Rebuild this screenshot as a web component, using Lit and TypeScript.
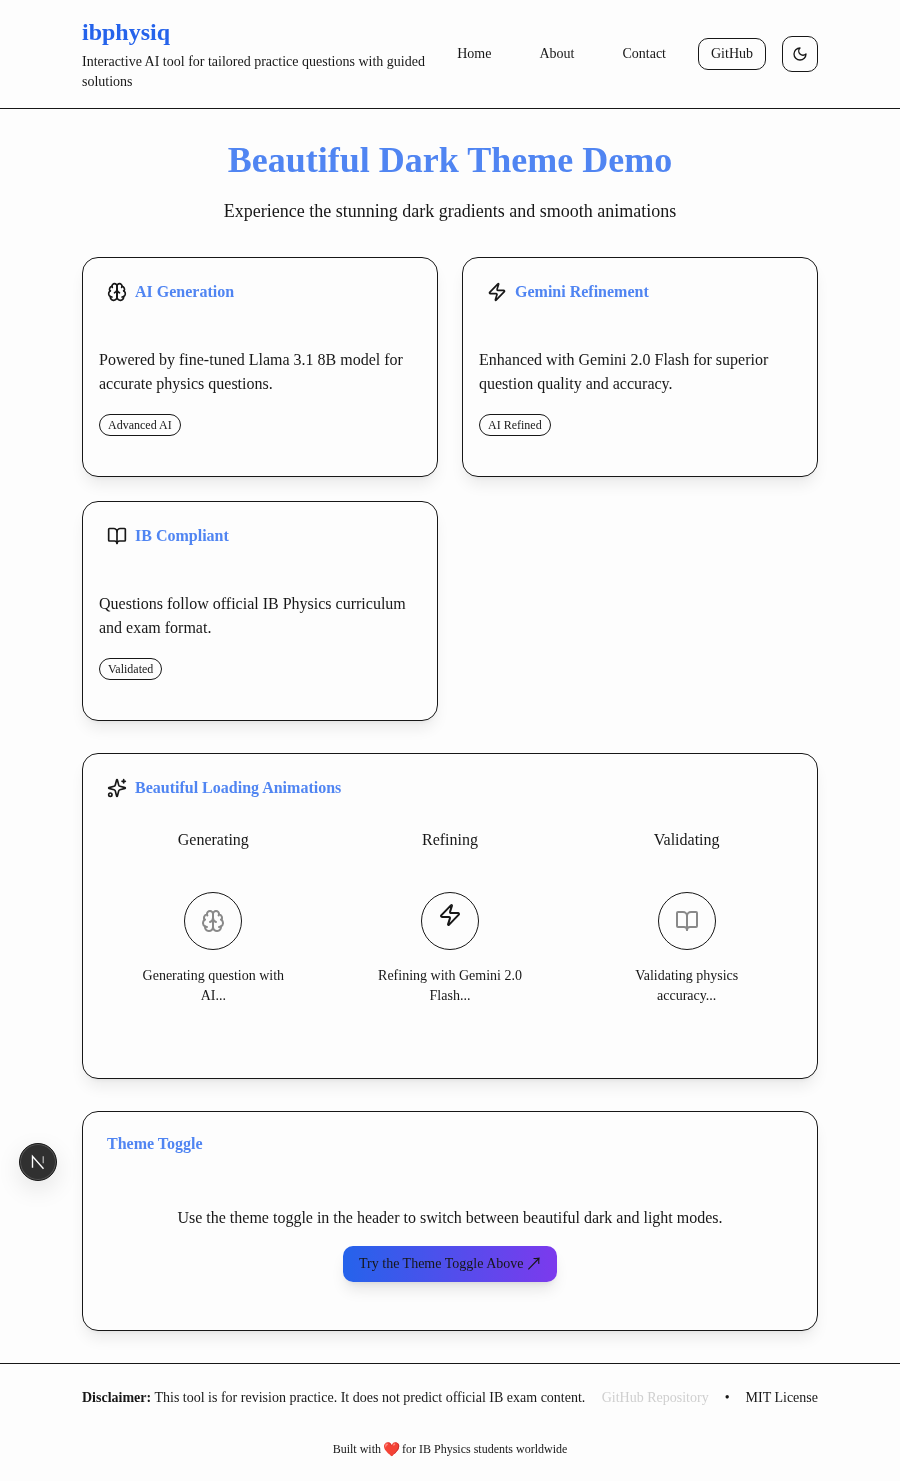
import {html, css, svg, LitElement} from 'lit';
import {customElement} from 'lit/decorators.js';

const brain = svg`
  <path d="M12 5a3 3 0 1 0-5.997.125 4 4 0 0 0-2.526 5.77 4 4 0 0 0 .556 6.588A4 4 0 1 0 12 18Z" />
  <path d="M12 5a3 3 0 1 1 5.997.125 4 4 0 0 1 2.526 5.77 4 4 0 0 1-.556 6.588A4 4 0 1 1 12 18Z" />
  <path d="M15 13a4.5 4.5 0 0 1-3-4 4.5 4.5 0 0 1-3 4" />
  <path d="M17.599 6.5a3 3 0 0 0 .399-1.375" />
  <path d="M6.003 5.125A3 3 0 0 0 6.401 6.5" />
  <path d="M3.477 10.896a4 4 0 0 1 .585-.396" />
  <path d="M19.938 10.5a4 4 0 0 1 .585.396" />
  <path d="M6 18a4 4 0 0 1-1.967-.516" />
  <path d="M19.967 17.484A4 4 0 0 1 18 18" />
  <path d="M12 18V9" />
`;
const zap = svg`<path d="M4 14a1 1 0 0 1-.78-1.63l9.9-10.2a.5.5 0 0 1 .86.46l-1.92 6.02A1 1 0 0 0 13 10h7a1 1 0 0 1 .78 1.63l-9.9 10.2a.5.5 0 0 1-.86-.46l1.92-6.02A1 1 0 0 0 11 14z" />`;
const book = svg`
  <path d="M12 7v14" />
  <path d="M3 18a1 1 0 0 1-1-1V4a1 1 0 0 1 1-1h5a4 4 0 0 1 4 4 4 4 0 0 1 4-4h5a1 1 0 0 1 1 1v13a1 1 0 0 1-1 1h-6a3 3 0 0 0-3 3 3 3 0 0 0-3-3z" />
`;
const sparkles = svg`
  <path d="M9.937 15.5A2 2 0 0 0 8.5 14.063l-6.135-1.582a.5.5 0 0 1 0-.962L8.5 9.936A2 2 0 0 0 9.937 8.5l1.582-6.135a.5.5 0 0 1 .963 0L14.063 8.5A2 2 0 0 0 15.5 9.937l6.135 1.581a.5.5 0 0 1 0 .964L15.5 14.063a2 2 0 0 0-1.437 1.437l-1.582 6.135a.5.5 0 0 1-.963 0z" />
  <path d="M20 2v4" />
  <path d="M22 4h-4" />
  <circle cx="4" cy="20" r="2" />
`;
const moon = svg`<path d="M12 3a6 6 0 0 0 9 9 9 9 0 1 1-9-9Z" />`;

const features = [
  {icon: brain, title: 'AI Generation', text: 'Powered by fine-tuned Llama 3.1 8B model for accurate physics questions.', badge: 'Advanced AI'},
  {icon: zap, title: 'Gemini Refinement', text: 'Enhanced with Gemini 2.0 Flash for superior question quality and accuracy.', badge: 'AI Refined'},
  {icon: book, title: 'IB Compliant', text: 'Questions follow official IB Physics curriculum and exam format.', badge: 'Validated'},
];

const loaders = [
  {icon: brain, title: 'Generating', text: 'Generating question with AI...', cls: 'faded'},
  {icon: zap, title: 'Refining', text: 'Refining with Gemini 2.0 Flash...', cls: 'raised'},
  {icon: book, title: 'Validating', text: 'Validating physics accuracy...', cls: 'faded'},
];

@customElement('app-root')
export class AppRoot extends LitElement {
  static styles = css`
    :host {
      display: block;
      position: relative;
      min-height: 1481px;
      background: #fdfdfd;
      color: #171717;
      font-family: 'Liberation Serif', 'Times New Roman', serif;
      font-size: 16px;
      line-height: 24px;
      font-feature-settings: 'liga' 1, 'kern' 1;
    }
    header, main, footer {
      will-change: transform;
    }
    svg.icon {
      fill: none;
      stroke: currentColor;
      stroke-width: 2;
      stroke-linecap: round;
      stroke-linejoin: round;
      flex: none;
      display: block;
    }
    header {
      display: flex;
      align-items: center;
      padding: 16px 82px;
      border-bottom: 1px solid #171717;
    }
    .brand {
      flex: 1;
      min-width: 0;
    }
    .brand h1 {
      margin: 0 0 4px;
      font-size: 24px;
      line-height: 32px;
      font-weight: 700;
      color: #2563eb;
    }
    .brand p {
      margin: 0;
      font-size: 14px;
      line-height: 20px;
    }
    nav {
      flex: none;
      display: flex;
      align-items: center;
      gap: 16px;
      font-size: 14px;
      line-height: 20px;
    }
    nav a {
      padding: 0 16px;
    }
    nav .github {
      border: 1px solid #171717;
      border-radius: 10px;
      padding: 5px 12px;
    }
    nav .toggle {
      width: 36px;
      height: 36px;
      box-sizing: border-box;
      border: 1px solid #171717;
      border-radius: 10px;
      display: flex;
      align-items: center;
      justify-content: center;
    }
    main {
      padding: 31px 82px 32px;
    }
    .hero {
      text-align: center;
      margin-bottom: 32px;
    }
    .hero h2 {
      margin: 0 0 17px;
      font-size: 36px;
      line-height: 40px;
      font-weight: 700;
      color: #5085f2;
    }
    .hero p {
      margin: 0;
      font-size: 18px;
      line-height: 28px;
    }
    .grid {
      display: grid;
      grid-template-columns: 1fr 1fr;
      gap: 24px;
      margin-bottom: 32px;
    }
    .card {
      box-sizing: border-box;
      border: 1px solid #171717;
      border-radius: 16px;
      background: #fdfdfd;
      box-shadow: 0 10px 15px -3px rgba(0, 0, 0, 0.08), 0 4px 6px -4px rgba(0, 0, 0, 0.08);
    }
    .card-title {
      display: flex;
      align-items: center;
      gap: 8px;
      padding: 24px 24px 0;
      font-size: 16px;
      line-height: 20px;
      font-weight: 700;
      color: #5085f2;
    }
    .card-title svg {
      color: #171717;
    }
    .feature {
      height: 220px;
    }
    .feature p {
      margin: 46px 16px 16px;
    }
    .badge {
      display: inline-block;
      margin-left: 16px;
      padding: 2px 8px;
      border: 1px solid #171717;
      border-radius: 999px;
      font-size: 12px;
      line-height: 16px;
    }
    .loading {
      height: 326px;
      margin-bottom: 32px;
    }
    .loaders {
      display: grid;
      grid-template-columns: repeat(3, 1fr);
      gap: 24px;
      padding: 30px 24px 0;
      text-align: center;
    }
    .loader h4 {
      margin: 0 0 40px;
      font-size: 16px;
      line-height: 24px;
      font-weight: 400;
    }
    .spinner {
      box-sizing: border-box;
      width: 58px;
      height: 58px;
      margin: 0 auto 16px;
      border: 1px solid #171717;
      border-radius: 50%;
      display: flex;
      align-items: center;
      justify-content: center;
    }
    .spinner .faded {
      opacity: 0.5;
    }
    .spinner .raised {
      transform: translateY(-6px);
    }
    .loader p {
      margin: 0;
      padding: 0 32px;
      font-size: 14px;
      line-height: 20px;
    }
    .theme {
      height: 220px;
    }
    .theme .card-title {
      padding-top: 22px;
    }
    .theme-body {
      margin-top: 52px;
      text-align: center;
    }
    .theme-body p {
      margin: 0 0 16px;
    }
    .try {
      display: inline-block;
      padding: 8px 16px;
      border-radius: 10px;
      font-size: 14px;
      line-height: 20px;
      background: linear-gradient(to right, #2563eb, #7c3aed);
      box-shadow: 0 10px 15px -3px rgba(0, 0, 0, 0.1), 0 4px 6px -4px rgba(0, 0, 0, 0.1);
    }
    .try .arrow {
      display: inline-block;
      font-family: 'Noto Sans CJK SC', sans-serif;
      line-height: 1;
      transform: scale(1.25);
    }
    footer {
      border-top: 1px solid #171717;
      padding: 24px 82px;
      font-size: 14px;
      line-height: 20px;
    }
    .foot-row {
      display: flex;
      justify-content: space-between;
    }
    .foot-row b {
      font-weight: 700;
    }
    .links {
      display: flex;
      gap: 16px;
    }
    .links .muted {
      color: #cfcfcf;
    }
    .built {
      margin-top: 33px;
      text-align: center;
      font-size: 12px;
      line-height: 16px;
    }
    .built .heart {
      display: inline-block;
      transform: scale(1.15);
    }
    .dev {
      position: absolute;
      left: 19px;
      top: 1143px;
      width: 38px;
      height: 38px;
      box-sizing: border-box;
      border-radius: 50%;
      border: 1px solid #161616;
      background: #303030;
      box-shadow: inset 0 0 0 1px #555, 0 8px 24px rgba(0, 0, 0, 0.1);
      display: flex;
      align-items: center;
      justify-content: center;
    }
  `;

  render() {
    return html`
      <header>
        <div class="brand">
          <h1>ibphysiq</h1>
          <p>Interactive AI tool for tailored practice questions with guided solutions</p>
        </div>
        <nav>
          <a>Home</a>
          <a>About</a>
          <a>Contact</a>
          <span class="github">GitHub</span>
          <span class="toggle">${this.icon(moon, 16)}</span>
        </nav>
      </header>
      <main>
        <div class="hero">
          <h2>Beautiful Dark Theme Demo</h2>
          <p>Experience the stunning dark gradients and smooth animations</p>
        </div>
        <div class="grid">
          ${features.map((f) => html`
            <div class="card feature">
              <div class="card-title">${this.icon(f.icon, 20)}${f.title}</div>
              <p>${f.text}</p>
              <span class="badge">${f.badge}</span>
            </div>
          `)}
        </div>
        <div class="card loading">
          <div class="card-title">${this.icon(sparkles, 20)}Beautiful Loading Animations</div>
          <div class="loaders">
            ${loaders.map((l) => html`
              <div class="loader">
                <h4>${l.title}</h4>
                <div class="spinner"><span class=${l.cls}>${this.icon(l.icon, 24)}</span></div>
                <p>${l.text}</p>
              </div>
            `)}
          </div>
        </div>
        <div class="card theme">
          <div class="card-title">Theme Toggle</div>
          <div class="theme-body">
            <p>Use the theme toggle in the header to switch between beautiful dark and light modes.</p>
            <span class="try">Try the Theme Toggle Above <span class="arrow">↗</span></span>
          </div>
        </div>
      </main>
      <footer>
        <div class="foot-row">
          <div><b>Disclaimer:</b> This tool is for revision practice. It does not predict official IB exam content.</div>
          <div class="links">
            <span class="muted">GitHub Repository</span>
            <span>•</span>
            <span>MIT License</span>
          </div>
        </div>
        <div class="built">Built with <span class="heart">❤️</span> for IB Physics students worldwide</div>
      </footer>
      <div class="dev">
        <svg width="20" height="20" viewBox="0 0 16 16" fill="none">
          <path d="M3.6 12.6V3.4L12.4 13.4" stroke="#fff" stroke-width="1.1" />
          <path d="M12.2 3.4V9" stroke="#aaa" stroke-width="1.1" />
        </svg>
      </div>
    `;
  }

  icon(body: unknown, size: number) {
    return html`<svg class="icon" width=${size} height=${size} viewBox="0 0 24 24">${body}</svg>`;
  }
}
